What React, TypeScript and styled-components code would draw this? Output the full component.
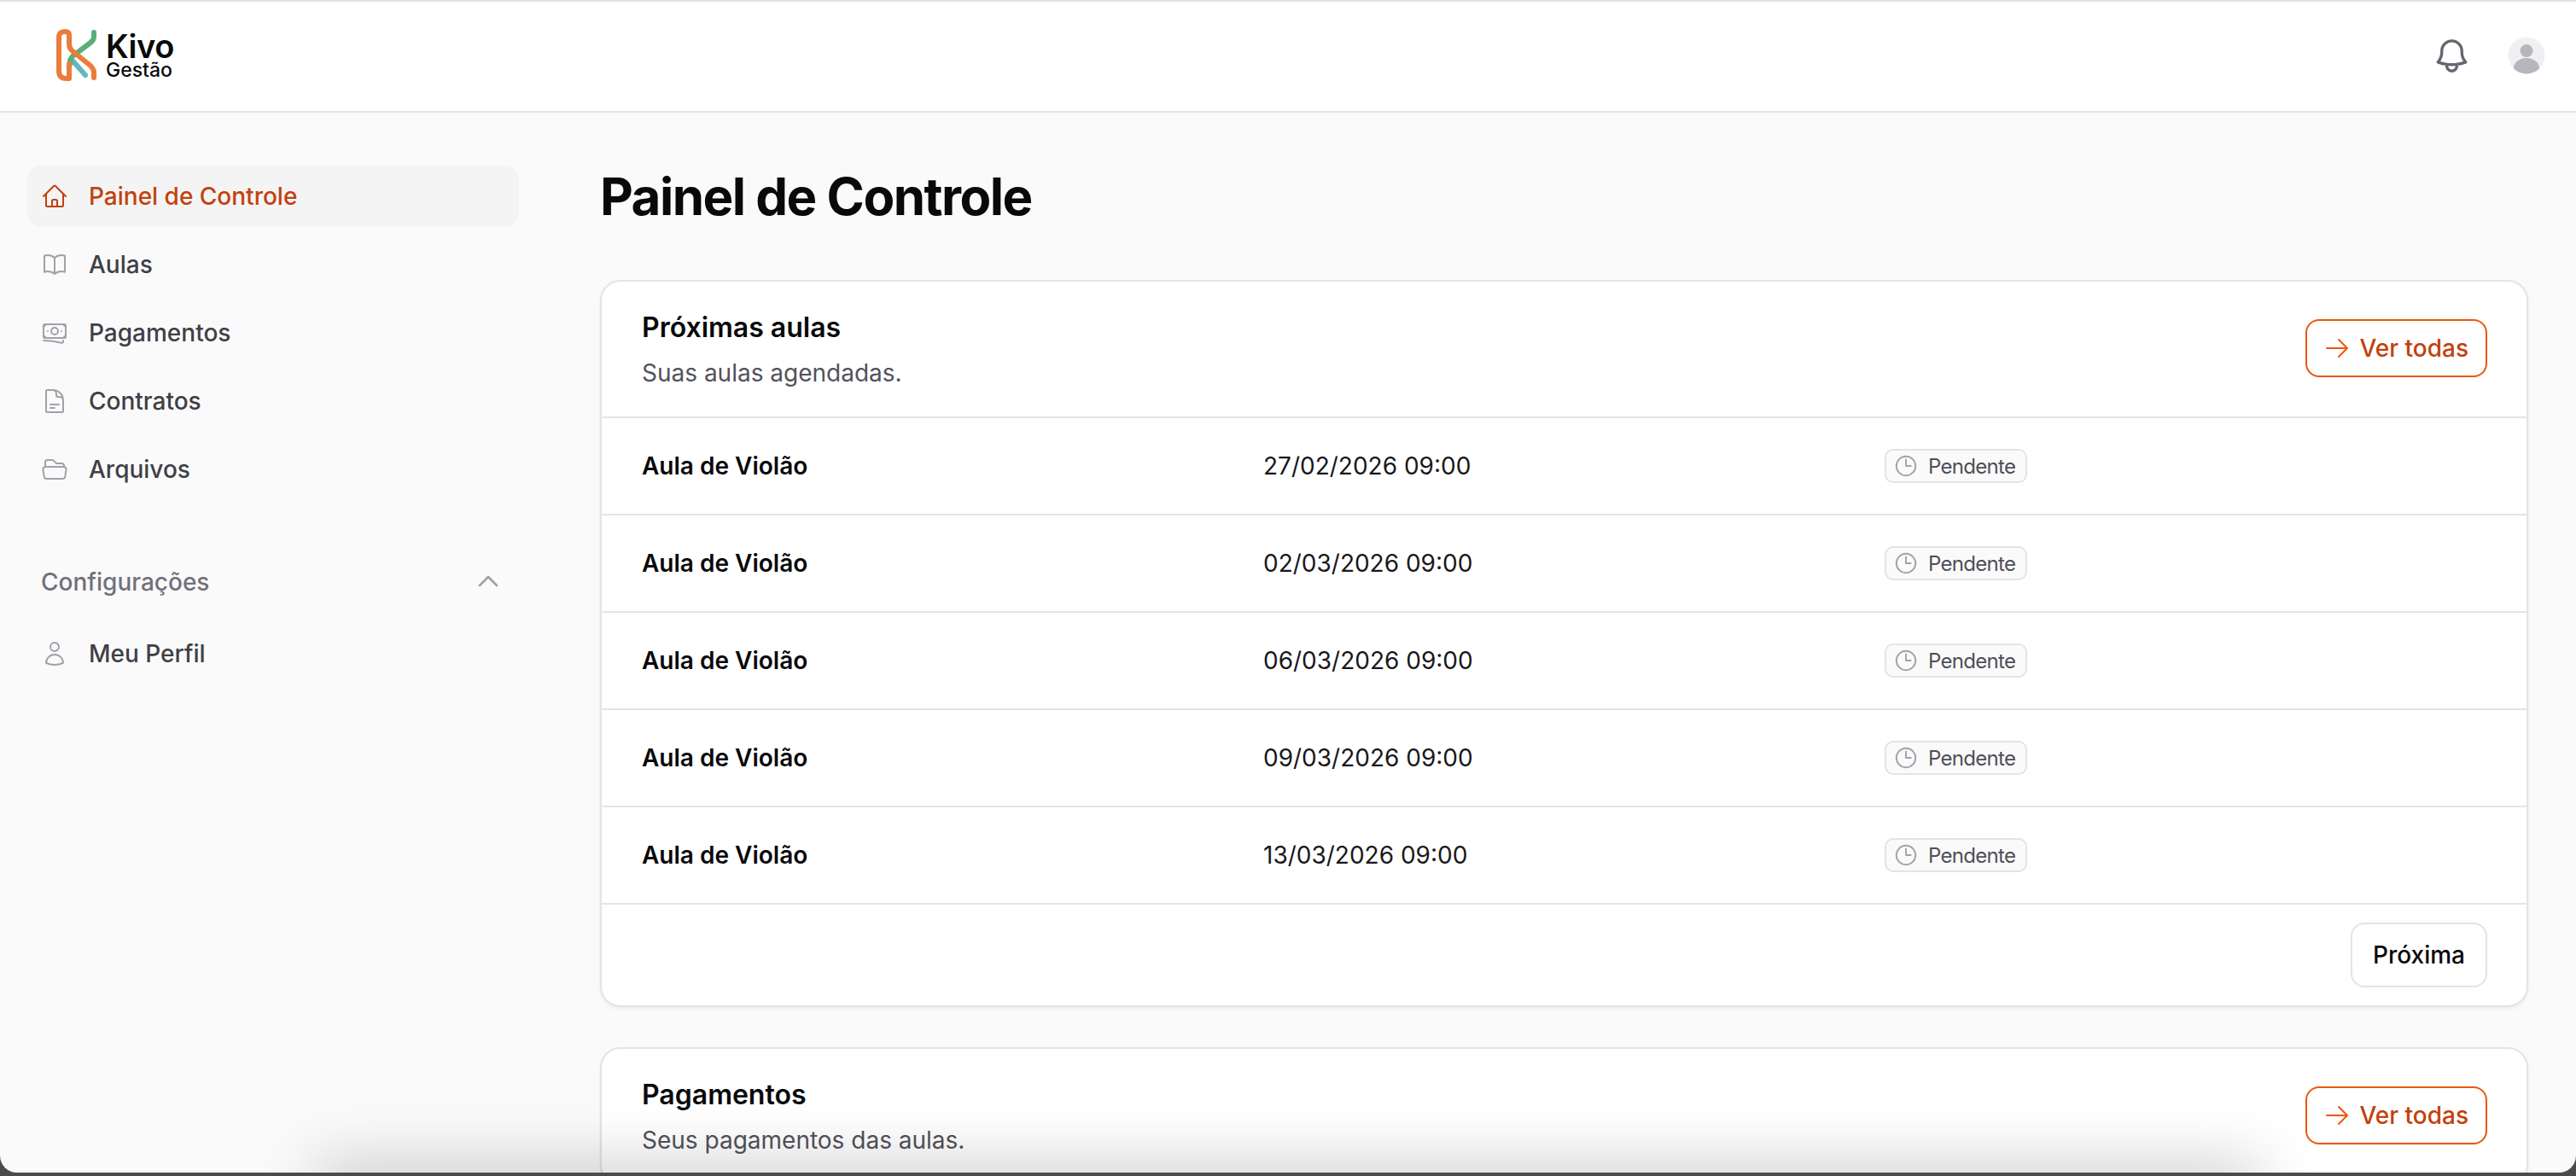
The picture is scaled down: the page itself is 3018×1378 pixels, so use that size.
import React from "react";
import styled, { createGlobalStyle } from "styled-components";
import {
  HiOutlineArrowRight,
  HiOutlineBanknotes,
  HiOutlineBell,
  HiOutlineBookOpen,
  HiOutlineChevronUp,
  HiOutlineClock,
  HiOutlineDocumentText,
  HiOutlineFolderOpen,
  HiOutlineHome,
  HiOutlineUser,
} from "react-icons/hi2";

const GlobalStyle = createGlobalStyle`
  html, body {
    margin: 0;
    padding: 0;
    background: #4b4b4d;
  }
  * {
    box-sizing: border-box;
  }
`;

const Desktop = styled.div`
  position: relative;
  width: 3018px;
  height: 1378px;
  overflow: hidden;
  background: #4b4b4d;
  font-family: "Inter", "Liberation Sans", sans-serif;
  color: #09090b;
`;

const AppWindow = styled.div`
  position: relative;
  height: 1374px;
  overflow: hidden;
  display: flex;
  flex-direction: column;
  background: #fafafa;
  border-top: 2px solid #e2e2e2;
  border-radius: 0 0 20px 20px;
`;

const BottomShade = styled.div`
  position: absolute;
  left: 380px;
  right: 380px;
  bottom: -30px;
  height: 30px;
  box-shadow: 0 0 70px 10px rgba(0, 0, 0, 0.22);
`;

const TopBar = styled.header`
  flex: none;
  height: 130px;
  display: flex;
  align-items: center;
  justify-content: space-between;
  padding: 0 36px 2px 65px;
  background: #fff;
  border-bottom: 2px solid #e4e4e7;
`;

const Brand = styled.div`
  display: flex;
  align-items: center;
  gap: 9px;
`;

const BrandText = styled.div`
  display: flex;
  flex-direction: column;
  color: #0a0a0a;
`;

const BrandName = styled.span`
  font-size: 38px;
  line-height: 34px;
  font-weight: 600;
  letter-spacing: -0.5px;
`;

const BrandSub = styled.span`
  font-size: 23px;
  line-height: 22px;
  font-weight: 500;
`;

const TopActions = styled.div`
  display: flex;
  align-items: center;
  gap: 42px;
  color: #66666f;
  font-size: 47px;

  > svg:first-child {
    stroke-width: 1.7;
  }
`;

const Columns = styled.div`
  flex: 1;
  min-height: 0;
  display: grid;
  grid-template-columns: 640px 1fr;
`;

const Sidebar = styled.aside`
  padding: 62px 32px 0;
  display: flex;
  flex-direction: column;
  gap: 8px;
`;

const NavItem = styled.a<{ $active?: boolean }>`
  height: 72px;
  display: flex;
  align-items: center;
  gap: 24px;
  padding: 0 16px;
  border-radius: 16px;
  font-size: 28px;
  font-weight: ${(p) => (p.$active ? 500 : 450)};
  color: ${(p) => (p.$active ? "#c2410c" : "#3f3f46")};
  background: ${(p) => (p.$active ? "#f4f4f5" : "transparent")};

  svg {
    flex: none;
    font-size: 32px;
    color: ${(p) => (p.$active ? "#c2410c" : "#a1a1aa")};
  }
`;

const GroupLabel = styled.div`
  height: 64px;
  margin: 56px 0 8px;
  display: flex;
  align-items: center;
  justify-content: space-between;
  padding: 0 20px 0 16px;
  font-size: 28px;
  font-weight: 450;
  color: #71717a;

  svg {
    font-size: 32px;
    color: #a1a1aa;
    margin-bottom: 2px;
    stroke-width: 2;
  }
`;

const Content = styled.main`
  min-width: 0;
  padding: 62px 56px 0 63px;
`;

const PageTitle = styled.h1`
  margin: 0 0 62px;
  font-size: 60px;
  line-height: 72px;
  font-weight: 700;
  letter-spacing: -1.5px;
  color: #09090b;
`;

const Card = styled.section`
  margin-bottom: 47px;
  background: #fff;
  border: 2px solid #e4e4e7;
  border-radius: 24px;
  box-shadow: 0 2px 4px rgba(0, 0, 0, 0.06);
`;

const CardHeader = styled.div`
  height: 158px;
  display: flex;
  align-items: center;
  justify-content: space-between;
  padding: 0 46px 0 47px;
`;

const CardTitle = styled.h2`
  margin: 0 0 11px;
  font-size: 32px;
  line-height: 44px;
  font-weight: 600;
  color: #09090b;
`;

const CardSubtitle = styled.p`
  margin: 0;
  font-size: 28px;
  line-height: 40px;
  color: #52525b;
`;

const OutlineLink = styled.a`
  height: 68px;
  margin-bottom: 3px;
  display: flex;
  align-items: center;
  gap: 10px;
  padding: 0 20px 0 19px;
  border: 2px solid #ea580c;
  border-radius: 16px;
  font-size: 28px;
  font-weight: 500;
  color: #c2410c;
  box-shadow: 0 1px 3px rgba(0, 0, 0, 0.05);

  svg {
    font-size: 32px;
    color: #ea580c;
  }
`;

const Row = styled.div`
  height: 114px;
  display: grid;
  grid-template-columns: repeat(3, 1fr);
  column-gap: 22px;
  align-items: center;
  padding: 0 46px 0 47px;
  border-top: 2px solid #e4e4e7;
  font-size: 28px;
`;

const RowName = styled.span`
  font-weight: 600;
  color: #09090b;
`;

const RowDate = styled.span`
  color: #18181b;
`;

const StatusBadge = styled.span`
  justify-self: start;
  height: 40px;
  display: inline-flex;
  align-items: center;
  gap: 11px;
  padding: 0 12px 0 8px;
  background: #fafafa;
  border: 2px solid #e4e4e7;
  border-radius: 10px;
  font-size: 24px;
  letter-spacing: -0.7px;
  color: #4f4f58;

  svg {
    font-size: 30px;
    color: #a1a1aa;
  }
`;

const CardFooter = styled.div`
  height: 120px;
  display: flex;
  align-items: center;
  justify-content: flex-end;
  padding: 0 46px;
  border-top: 2px solid #e4e4e7;
`;

const PagerButton = styled.button`
  height: 76px;
  padding: 0 24px;
  background: #fff;
  border: 2px solid #e4e4e7;
  border-radius: 16px;
  font-family: inherit;
  font-size: 28px;
  font-weight: 500;
  color: #09090b;
`;

const KivoMark = () => (
  <svg width="50" height="62" viewBox="65 37 50 62" fill="none" strokeLinecap="round">
    <path d="M85 74 L100 91" stroke="#62b8bd" strokeWidth="6" />
    <path d="M110 41 V46 Q110 50 106 53 L86 68 Q81 72 82 78" stroke="#59ae7c" strokeWidth="6" />
    <path
      d="M110 94 V88 Q110 84 106 80 L84 62 Q81 59 81 54 V44 Q81 40 76 40 Q69 40 69 47 V86 Q69 95 78 95 H81 V78"
      stroke="#ea7d3c"
      strokeWidth="6"
      strokeLinejoin="round"
    />
  </svg>
);

const AvatarIcon = () => (
  <svg width="44" height="44" viewBox="0 0 44 44">
    <defs>
      <clipPath id="avatar-clip">
        <circle cx="22" cy="22" r="21.5" />
      </clipPath>
    </defs>
    <circle cx="22" cy="22" r="21.5" fill="#f0f0f2" />
    <g clipPath="url(#avatar-clip)" fill="#b6b7bc">
      <circle cx="22" cy="16.5" r="7.5" />
      <ellipse cx="22" cy="37" rx="15" ry="12" />
    </g>
  </svg>
);

const lessons = ["27/02/2026 09:00", "02/03/2026 09:00", "06/03/2026 09:00", "09/03/2026 09:00", "13/03/2026 09:00"];

const App = () => {
  return (
    <Desktop>
      <GlobalStyle />
      <AppWindow>
        <TopBar>
          <Brand>
            <KivoMark />
            <BrandText>
              <BrandName>Kivo</BrandName>
              <BrandSub>Gestão</BrandSub>
            </BrandText>
          </Brand>
          <TopActions>
            <HiOutlineBell />
            <AvatarIcon />
          </TopActions>
        </TopBar>
        <Columns>
          <Sidebar>
            <NavItem $active>
              <HiOutlineHome />
              Painel de Controle
            </NavItem>
            <NavItem>
              <HiOutlineBookOpen />
              Aulas
            </NavItem>
            <NavItem>
              <HiOutlineBanknotes />
              Pagamentos
            </NavItem>
            <NavItem>
              <HiOutlineDocumentText />
              Contratos
            </NavItem>
            <NavItem>
              <HiOutlineFolderOpen />
              Arquivos
            </NavItem>
            <GroupLabel>
              Configurações
              <HiOutlineChevronUp />
            </GroupLabel>
            <NavItem>
              <HiOutlineUser />
              Meu Perfil
            </NavItem>
          </Sidebar>
          <Content>
            <PageTitle>Painel de Controle</PageTitle>
            <Card>
              <CardHeader>
                <div>
                  <CardTitle>Próximas aulas</CardTitle>
                  <CardSubtitle>Suas aulas agendadas.</CardSubtitle>
                </div>
                <OutlineLink>
                  <HiOutlineArrowRight />
                  Ver todas
                </OutlineLink>
              </CardHeader>
              {lessons.map((date) => (
                <Row key={date}>
                  <RowName>Aula de Violão</RowName>
                  <RowDate>{date}</RowDate>
                  <StatusBadge>
                    <HiOutlineClock />
                    Pendente
                  </StatusBadge>
                </Row>
              ))}
              <CardFooter>
                <PagerButton>Próxima</PagerButton>
              </CardFooter>
            </Card>
            <Card>
              <CardHeader>
                <div>
                  <CardTitle>Pagamentos</CardTitle>
                  <CardSubtitle>Seus pagamentos das aulas.</CardSubtitle>
                </div>
                <OutlineLink>
                  <HiOutlineArrowRight />
                  Ver todas
                </OutlineLink>
              </CardHeader>
            </Card>
          </Content>
        </Columns>
        <BottomShade />
      </AppWindow>
    </Desktop>
  );
};

export default App;
